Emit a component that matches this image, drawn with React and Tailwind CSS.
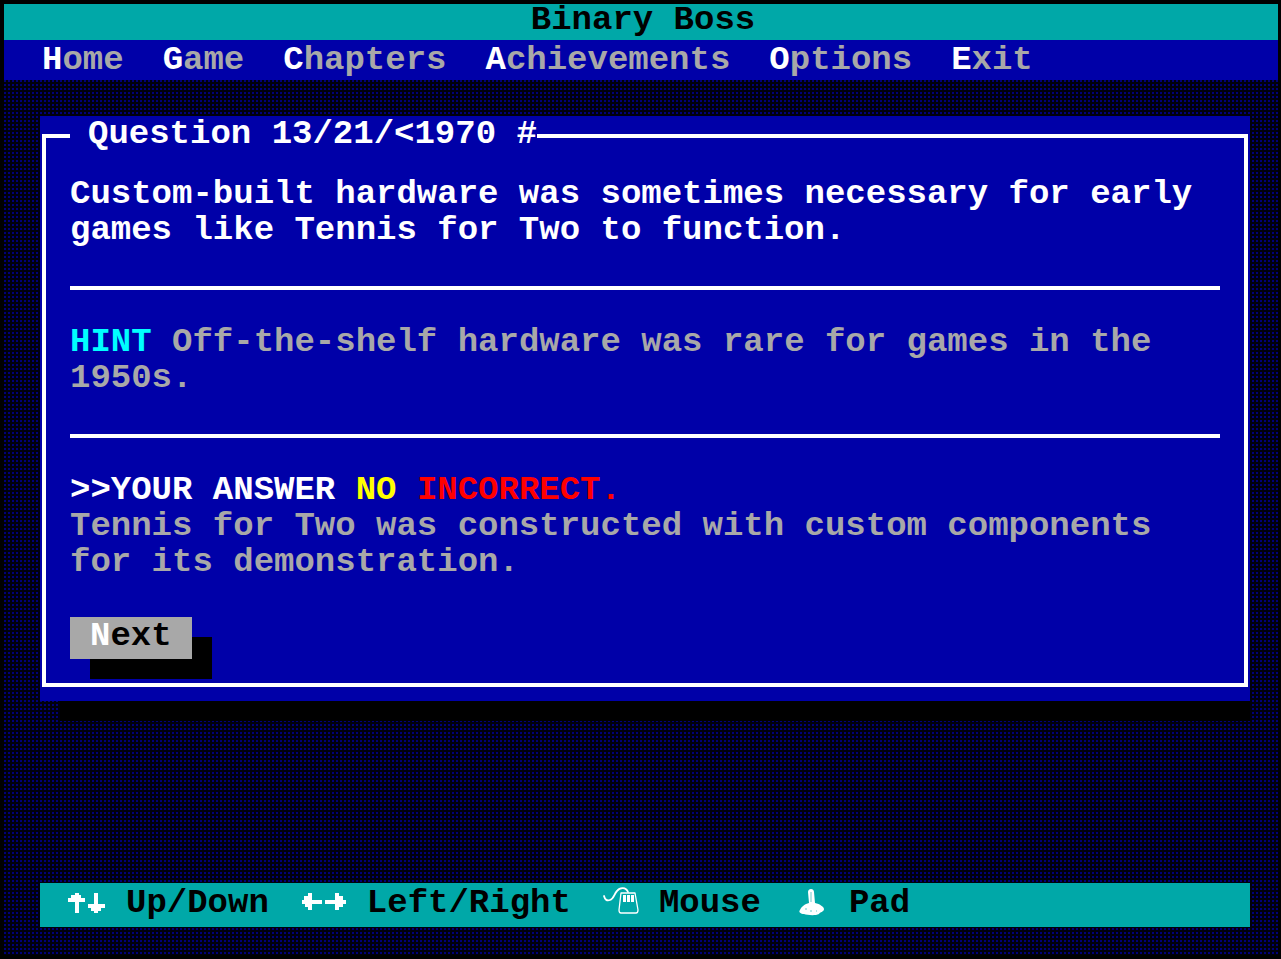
import React from "react";

const menu = ["Home", "Game", "Chapters", "Achievements", "Options", "Exit"];

function UpDownIcon() {
  return (
    <svg className="mt-0.5" width="38" height="36" viewBox="0 0 38 36" fill="#fff" shapeRendering="crispEdges">
      <path d="M7 6h4v2h2v3h4v4h-6v11h-4v-11h-7v-4h3v-3h4z" />
      <path d="M26 6h4v11h7v4h-4v3h-3v2h-4v-2h-3v-3h-3v-4h6z" />
    </svg>
  );
}

function LeftRightIcon() {
  return (
    <svg className="mt-0.5" width="46" height="36" viewBox="0 0 46 36" fill="#fff" shapeRendering="crispEdges">
      <path d="M7 6h4v7h10v4h-10v6h-4v-3h-3v-3h-3v-4h2v-4h4z" />
      <path d="M34 6h4v3h4v4h3v4h-3v3h-4v3h-4v-6h-10v-4h10z" />
    </svg>
  );
}

function MouseIcon() {
  return (
    <svg className="mt-0.5" width="36" height="36" viewBox="0 0 36 36" fill="none" stroke="#fff" strokeLinecap="round" strokeLinejoin="round">
      <path d="M1 9c1 4 3 5 6 4c4-1 4-6 7-9c3-4 9-4 11 1" strokeWidth="1.8" />
      <path d="M18 6h14l3 17q0 3-2 3h-15q-2 0-2-3z" strokeWidth="1.3" />
      <path d="M21.5 8v7M25.5 8v7M29.5 8v7" strokeWidth="3" strokeLinecap="butt" />
    </svg>
  );
}

function JoystickIcon() {
  return (
    <svg className="mt-0.5" width="36" height="36" viewBox="0 0 36 36" fill="#fff">
      <path d="M15 5c0-4 6-4 6 0l1 11c5 1 9 4 9 6c0 3-4 3-5 5c-4 2-12 1-15 0c-3 0-6-2-4-4c1-3 5-6 9-7z" />
      <path d="M18 5v10M12 22h2M17 24h2M23 24h1" stroke="#00a8a8" strokeWidth="0.6" />
    </svg>
  );
}

const controls = [
  { label: "Up/Down", Icon: UpDownIcon },
  { label: "Left/Right", Icon: LeftRightIcon },
  { label: "Mouse", Icon: MouseIcon },
  { label: "Pad", Icon: JoystickIcon },
];

export default function App() {
  return (
    <div className="min-h-screen flex flex-col bg-black p-1 pr-[3px] font-['Liberation_Mono',monospace] font-bold text-[34px] leading-9">
      <h1 className="bg-[#00a8a8] pb-1 pl-1 leading-8 text-black text-center">Binary Boss</h1>

      {/* MENU */}
      <nav className="flex flex-wrap gap-x-[39px] bg-[#0000a8] py-0.5 pl-[38px] text-[#a8a8a8]">
        {menu.map((item) => (
          <a key={item} href="#">
            <span className="text-white">{item[0]}</span>
            {item.slice(1)}
          </a>
        ))}
      </nav>

      {/* DESKTOP */}
      <div
        className="grow flex flex-col pt-9 pb-7 pl-9 pr-7 bg-[#000078] bg-size-[4px_4px]
                   bg-[linear-gradient(transparent_50%,#00000c_50%),linear-gradient(90deg,transparent_50%,#00000c_50%)]"
      >
        <main className="bg-[#0000a8] px-0.5 pt-0.5 pb-3.5 text-white">
          <fieldset className="border-4 border-white px-6 pb-6">
            <legend className="pb-1 pl-[18px] leading-8">Question 13/21/&lt;1970 #</legend>

            <p className="pt-[22px]">
              Custom-built hardware was sometimes necessary for early games
              like Tennis for Two to function.
            </p>
            <hr className="mt-[38px] mb-[34px] border-t-4 border-white" />
            <p className="text-[#a8a8a8]">
              <span className="inline-block text-[#00ffff]">HINT</span>{" "}
              Off-the-shelf hardware was rare for games in the 1950s.
            </p>
            <hr className="mt-[38px] mb-[34px] border-t-4 border-white" />
            <p>
              &gt;&gt;YOUR ANSWER <span className="text-[#ffff00]">NO</span>{" "}
              <span className="text-[#ff0000]">INCORRECT.</span>
            </p>
            <p className="text-[#a8a8a8]">
              Tennis for Two was constructed with custom components for its
              demonstration.
            </p>
            <button
              type="button"
              className="block mt-[37px] h-[42px] px-5 pb-1 bg-[#a8a8a8] text-black shadow-[20px_20px_0_#000] cursor-pointer"
            >
              <span className="text-white">N</span>ext
            </button>
          </fieldset>
        </main>
        <div className="ml-5 h-5 bg-black" />

        {/* CONTROLS */}
        <footer className="mt-auto flex flex-wrap gap-x-8 bg-[#00a8a8] pt-0.5 pb-1 pl-7 text-black">
          {controls.map(({ label, Icon }) => (
            <div key={label} className="flex gap-5">
              <Icon />
              <span>{label}</span>
            </div>
          ))}
        </footer>
      </div>
    </div>
  );
}
